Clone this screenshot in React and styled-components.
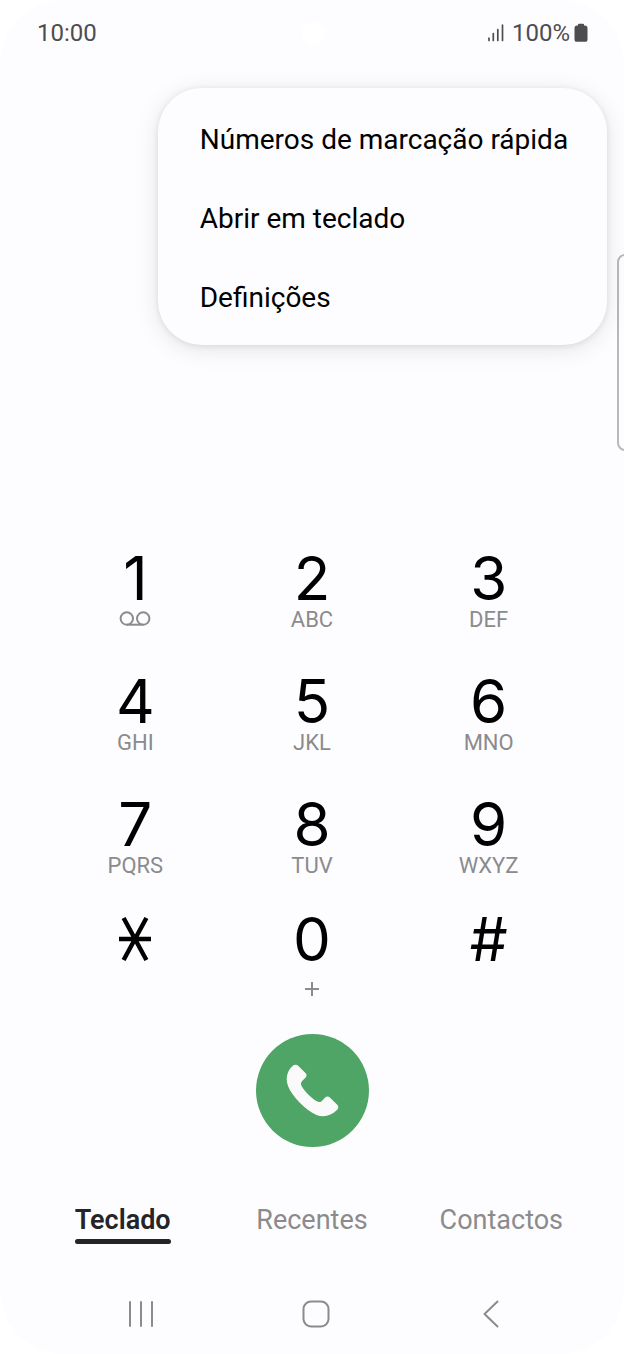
import React from "react"
import styled, { createGlobalStyle, ThemeProvider } from "styled-components"

const theme = {
  colors: {
    background: "#fdfdff",
    ink: "#000000",
    active: "#252528",
    muted: "#8b8b8d",
    status: "#4d4d4f",
    call: "#4ea566",
  },
  fonts: {
    text: `Roboto, "Liberation Sans", sans-serif`,
    digits: `Inter, Roboto, sans-serif`,
  },
}

const GlobalStyle = createGlobalStyle`
  *, *::before, *::after {
    box-sizing: border-box;
  }
  body {
    margin: 0;
    background: #ffffff;
  }
  button {
    margin: 0;
    padding: 0;
    border: 0;
    background: none;
    color: inherit;
    font: inherit;
    cursor: pointer;
  }
  svg {
    display: block;
  }
`

const Phone = styled.div`
  position: relative;
  display: flex;
  flex-direction: column;
  min-height: 100vh;
  overflow: hidden;
  border-radius: 64px;
  background: ${props => props.theme.colors.background};
  color: ${props => props.theme.colors.ink};
  font-family: ${props => props.theme.fonts.text};
`

const StatusBar = styled.header`
  display: grid;
  grid-template-columns: 1fr auto 1fr;
  align-items: center;
  height: 65px;
  padding: 0 36px 0 37px;
  color: ${props => props.theme.colors.status};
  font-size: 24px;
  line-height: 28px;
`

const Camera = styled.span`
  width: 22px;
  height: 22px;
  border-radius: 50%;
  background: #ffffff;
`

const StatusIcons = styled.div`
  display: flex;
  align-items: center;
  justify-content: flex-end;
`

const Percent = styled.span`
  margin: 0 4px 0 7px;
`

const Menu = styled.div`
  position: absolute;
  top: 88px;
  right: 17px;
  display: flex;
  flex-direction: column;
  width: 72%;
  padding: 12px 0 8px;
  border-radius: 44px;
  background: #fdfdff;
  box-shadow: 0 4px 24px rgba(0, 0, 0, 0.1), 0 1px 6px rgba(0, 0, 0, 0.09);
`

const MenuItem = styled.button`
  padding: 0 42px;
  font-size: 28px;
  line-height: 79px;
  text-align: left;
  white-space: nowrap;
`

const EdgeHandle = styled.span`
  position: absolute;
  top: 254px;
  right: -9px;
  width: 16px;
  height: 197px;
  border: 2px solid #b9b9bb;
  border-radius: 8px;
  background: #fdfdff;
`

const Keypad = styled.main`
  display: grid;
  grid-template-columns: repeat(3, 1fr);
  grid-template-rows: 100px 100px 92px 92px;
  row-gap: 23px;
  margin-top: auto;
  padding: 0 47px;
`

const Key = styled.button`
  display: flex;
  flex-direction: column;
  align-items: center;
  justify-content: ${props => (props.$spread ? "space-between" : "flex-start")};
`

const Digit = styled.span`
  display: flex;
  align-items: center;
  height: 56px;
  font-family: ${props => props.theme.fonts.digits};
  font-size: 60px;
  line-height: 56px;
`

const Letters = styled.span`
  display: flex;
  align-items: center;
  height: 28px;
  color: ${props => props.theme.colors.muted};
  font-size: 22px;
  line-height: 28px;
`

const CallButton = styled.button`
  display: flex;
  align-items: center;
  justify-content: center;
  align-self: center;
  width: 113px;
  height: 113px;
  margin-top: 31px;
  border-radius: 50%;
  background: ${props => props.theme.colors.call};
`

const Tabs = styled.nav`
  display: grid;
  grid-template-columns: repeat(3, 1fr);
  justify-items: center;
  margin-top: 57px;
  padding: 0 28px;
`

const Tab = styled.button`
  padding-bottom: 5px;
  color: ${props => (props.$active ? props.theme.colors.active : props.theme.colors.muted)};
  font-size: 27px;
  font-weight: ${props => (props.$active ? 600 : 400)};
  line-height: 32px;

  &::after {
    content: "";
    display: block;
    height: 5px;
    margin-top: 3px;
    border-radius: 3px;
    background: ${props => (props.$active ? props.theme.colors.active : "transparent")};
  }
`

const NavBar = styled.footer`
  display: grid;
  grid-template-columns: repeat(3, 1fr);
  justify-items: center;
  margin-top: 51px;
  padding: 0 46px 26px 53px;
  color: ${props => props.theme.colors.muted};
`

const SignalIcon = () => (
  <svg width="18" height="18" viewBox="0 0 18 18" fill="none" stroke="currentColor" strokeWidth="1.7" strokeLinecap="round">
    <path d="M2 14.2V16.5M6.3 9.5V16.5M10.8 5.5V16.5M15.5 1.2V16.5" />
  </svg>
)

const BatteryIcon = () => (
  <svg width="14" height="20" viewBox="0 0 14 20" fill="currentColor">
    <path d="M4 2.5V1.6C4 1 4.4.7 5 .7H9C9.6.7 10 1 10 1.6V2.5H11C12.5 2.5 13.5 3.5 13.5 5V16.5C13.5 18 12.7 18.8 11.2 18.8H2.8C1.3 18.8.5 18 .5 16.5V5C.5 3.5 1.5 2.5 3 2.5Z" />
  </svg>
)

const VoicemailIcon = () => (
  <svg width="32" height="18" viewBox="0 0 32 18" fill="none" stroke="currentColor" strokeWidth="2">
    <circle cx="7.8" cy="7.5" r="6.2" />
    <circle cx="24.2" cy="7.5" r="6.2" />
    <path d="M7.8 13.7H24.2" />
  </svg>
)

const StarIcon = () => (
  <svg width="34" height="44" viewBox="0 0 34 44" fill="none" stroke="currentColor" strokeWidth="4.4">
    <path d="M1 22H33M5.6 1L28.4 43M28.4 1L5.6 43" />
  </svg>
)

const PlusIcon = () => (
  <svg width="14" height="14" viewBox="0 0 14 14" fill="none" stroke="currentColor" strokeWidth="2">
    <path d="M0 7H14M7 0V14" />
  </svg>
)

const PhoneIcon = () => (
  <svg width="53" height="53" viewBox="0 0 53 53" fill="#fafafa">
    <path d="M6.5 2C8.5.2 10.6.2 12.4 1.9L19.2 8.800C21 10.700 21 12.200 19.200 14L16.400 16.700C14.700 18.400 14.500 19.900 15.600 21.900C18.700 27.500 25.200 33.800 30.800 37.200C32.900 38.400 34.600 38.200 36.300 36.400L38.700 33.900C40.500 32 42.300 32 44.100 33.800L51 40.600C52.700 42.300 52.700 44.300 51.200 45.800C45.500 51.700 37.500 53.900 30.500 50.900C19.500 46.100 6.500 33 2.100 22.200C-.8 14.900.8 7.200 6.500 2Z" />
  </svg>
)

const RecentAppsIcon = () => (
  <svg width="26" height="28" viewBox="0 0 26 28" fill="none" stroke="currentColor" strokeWidth="2" strokeLinecap="round">
    <path d="M2 2V26M13 2V26M24 2V26" />
  </svg>
)

const HomeIcon = () => (
  <svg width="28" height="28" viewBox="0 0 28 28" fill="none" stroke="currentColor" strokeWidth="2">
    <rect x="1.5" y="1.5" width="25" height="25" rx="7.5" />
  </svg>
)

const BackIcon = () => (
  <svg width="16" height="28" viewBox="0 0 16 28" fill="none" stroke="currentColor" strokeWidth="2" strokeLinecap="round" strokeLinejoin="round">
    <path d="M14.5 1.5L1.5 14L14.5 26.5" />
  </svg>
)

const menuItems = ["Números de marcação rápida", "Abrir em teclado", "Definições"]

const keys = [
  { digit: "1", letters: <VoicemailIcon />, label: "1, correio de voz" },
  { digit: "2", letters: "ABC" },
  { digit: "3", letters: "DEF" },
  { digit: "4", letters: "GHI" },
  { digit: "5", letters: "JKL" },
  { digit: "6", letters: "MNO" },
  { digit: "7", letters: "PQRS" },
  { digit: "8", letters: "TUV" },
  { digit: "9", letters: "WXYZ" },
  { digit: <StarIcon />, label: "Asterisco" },
  { digit: "0", letters: <PlusIcon />, label: "0, mais", spread: true },
  { digit: "#" },
]

const tabs = ["Teclado", "Recentes", "Contactos"]

export default () => (
  <ThemeProvider theme={theme}>
    <GlobalStyle />
    <Phone>
      <StatusBar>
        <span>10:00</span>
        <Camera />
        <StatusIcons>
          <SignalIcon />
          <Percent>100%</Percent>
          <BatteryIcon />
        </StatusIcons>
      </StatusBar>
      <EdgeHandle />
      <Menu role="menu">
        {menuItems.map(item => (
          <MenuItem key={item} role="menuitem">
            {item}
          </MenuItem>
        ))}
      </Menu>
      <Keypad>
        {keys.map((item, i) => (
          <Key key={i} aria-label={item.label} $spread={item.spread}>
            <Digit>{item.digit}</Digit>
            {item.letters && <Letters>{item.letters}</Letters>}
          </Key>
        ))}
      </Keypad>
      <CallButton aria-label="Ligar">
        <PhoneIcon />
      </CallButton>
      <Tabs>
        {tabs.map((tab, i) => (
          <Tab key={tab} $active={i === 0}>
            {tab}
          </Tab>
        ))}
      </Tabs>
      <NavBar>
        <button aria-label="Aplicações recentes">
          <RecentAppsIcon />
        </button>
        <button aria-label="Início">
          <HomeIcon />
        </button>
        <button aria-label="Voltar">
          <BackIcon />
        </button>
      </NavBar>
    </Phone>
  </ThemeProvider>
)
